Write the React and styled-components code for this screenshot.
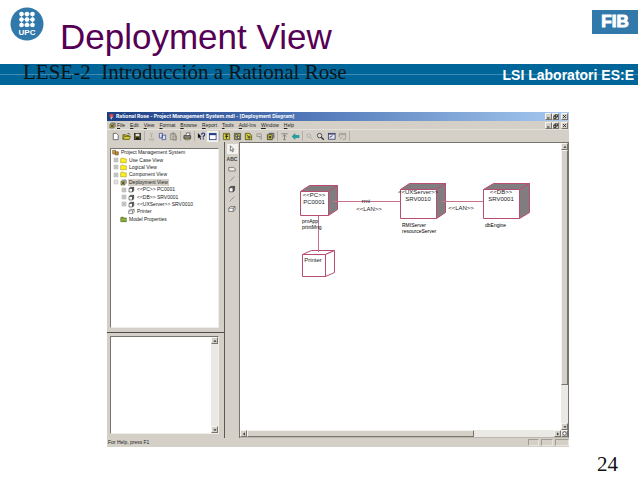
import React from "react";
import styled, { createGlobalStyle, css } from "styled-components";

const face = "#d4d0c8";

const GlobalStyle = createGlobalStyle`
  body {
    margin: 0;
    background: #fff;
    font-family: "Liberation Sans", Arial, sans-serif;
  }
  *, *::before, *::after { box-sizing: border-box; }
  button {
    margin: 0;
    padding: 0;
    border: 0;
    background: none;
    font: inherit;
    color: inherit;
  }
  svg { display: block; flex: none; }
`;

const Slide = styled.main`
  display: flex;
  flex-direction: column;
`;

const Header = styled.header`
  display: flex;
  align-items: flex-start;
  height: 64px;
  padding: 7px 0 0 10px;
`;

const SlideTitle = styled.h1`
  flex: 1;
  margin: 10px 0 0 16px;
  font-size: 35px;
  line-height: 40px;
  font-weight: 400;
  color: #550055;
  white-space: nowrap;
`;

const FibBadge = styled.div`
  display: flex;
  align-items: center;
  justify-content: center;
  width: 46px;
  height: 24px;
  margin-top: 3px;
  background: #3079aa;
`;

const Band = styled.div`
  display: flex;
  justify-content: space-between;
  height: 21px;
  padding: 0 4px 0 23px;
  background: linear-gradient(#3d8ab2, #3d8ab2) 0 10px / 100% 1px no-repeat #006699;
`;

const Course = styled.div`
  font-family: "Liberation Serif", "Times New Roman", serif;
  font-size: 21px;
  line-height: 16px;
  color: #0c1418;
  white-space: pre;
`;

const Department = styled.div`
  font-size: 14px;
  line-height: 22px;
  font-weight: 700;
  color: #fff;
  white-space: nowrap;
`;

const AppWindow = styled.section`
  display: flex;
  flex-direction: column;
  margin: 27px 69px 0 107px;
  background: ${face};
  font-size: 5px;
  line-height: 7px;
  color: #222;
`;

const TitleBar = styled.div`
  display: flex;
  align-items: center;
  height: 9px;
  padding: 0 1px 0 1px;
  gap: 1px;
  background: linear-gradient(90deg, #1d3f85, #4c73b4 40%, #a6caf0);
  color: #fff;
  font-family: Inter, "Liberation Sans", sans-serif;
  font-weight: 700;
  white-space: nowrap;
`;

const MenuBar = styled.nav`
  display: flex;
  align-items: center;
  height: 8px;
  padding: 0 1px 0 2px;
  white-space: nowrap;
`;

const Menus = styled.div`
  display: flex;
  flex: 1;
  gap: 5px;
  margin-left: 1px;
`;

const MenuButton = styled.button`
  &::first-letter { text-decoration: underline; }
`;

const WindowButtons = styled.div`
  display: flex;
  margin-left: auto;
`;

const raised = css`
  background: ${face};
  border: 1px solid;
  border-color: #f4f2ee #77746e #77746e #f4f2ee;
`;

const WindowButton = styled.button`
  ${raised}
  display: grid;
  place-items: center;
  width: 7px;
  height: 7px;
  margin-left: ${(p) => (p.$apart ? "2px" : "0")};
`;

const Toolbar = styled.div`
  display: flex;
  align-items: center;
  height: 13px;
  padding-left: 3px;
  border-top: 1px solid #e6e3dd;
`;

const ToolButton = styled.button`
  display: grid;
  place-items: center;
  width: 11px;
  height: 11px;
  background: ${(p) => (p.$on ? "#f3f2ee" : "transparent")};
`;

const Divider = styled.span`
  width: 1px;
  height: 10px;
  margin: 0 1px;
  background: #b4b0a8;
`;

const Body = styled.div`
  display: flex;
  height: 296px;
`;

const Side = styled.aside`
  display: flex;
  flex-direction: column;
  width: 117px;
  padding: 6px 5px 4px 3px;
`;

const sunken = css`
  background: #fff;
  border: 1px solid;
  border-color: #77746e #efede8 #efede8 #77746e;
`;

const Tree = styled.ul`
  ${sunken}
  flex: 181;
  margin: 0;
  padding: 0;
  list-style: none;
  display: grid;
  grid-template-rows: repeat(2, 37px);
  align-content: start;
`;

const TreeGroup = styled.li`
  display: grid;
  grid-template-rows: repeat(5, 1fr);
`;

const TreeRow = styled.div`
  display: flex;
  align-items: center;
  gap: 1px;
  padding-left: ${(p) => p.$indent}px;
  white-space: nowrap;
`;

const TreeLabel = styled.span`
  padding: 0 1px;
  background: ${(p) => (p.$selected ? face : "transparent")};
`;

const Splitter = styled.div`
  height: 1px;
  margin: 4px -5px 3px -3px;
  background: #4e4c48;
`;

const Documentation = styled.div`
  ${sunken}
  display: flex;
  justify-content: flex-end;
  flex: 97;
`;

const VScroll = styled.div`
  display: flex;
  flex-direction: column;
  width: 7px;
  background: #ebe9e6;
`;

const HScroll = styled.div`
  display: flex;
  height: 7px;
  background: #ebe9e6;
`;

const ScrollButton = styled.button`
  ${raised}
  display: grid;
  place-items: center;
  width: 7px;
  height: 7px;
  flex: none;
`;

const Thumb = styled.div`
  ${raised}
  flex: ${(p) => p.$share};
`;

const Track = styled.div`
  flex: ${(p) => p.$share};
`;

const Palette = styled.div`
  display: flex;
  flex-direction: column;
  align-items: center;
  width: 16px;
  padding-top: 2px;
  border-left: 1px solid #5a5854;
  border-right: 1px solid #77746e;
`;

const PaletteButton = styled.button`
  display: grid;
  place-items: center;
  width: 11px;
  height: 10px;
  background: ${(p) => (p.$on ? "#f3f2ee" : "transparent")};
`;

const Diagram = styled.div`
  display: flex;
  flex-direction: column;
  flex: 1;
  min-width: 0;
  border-top: 1px solid #77746e;
  border-bottom: 1px solid #bab6ae;
  border-right: 1px solid #77746e;
`;

const DiagramRow = styled.div`
  display: flex;
  flex: 1;
`;

const Canvas = styled.div`
  flex: 1;
  min-width: 0;
  overflow: hidden;
  background: #fff;
`;

const NodeLabel = styled.text`
  font-size: 6px;
  fill: #222;
  text-anchor: middle;
`;

const ProcessLabel = styled.text`
  font-size: 5px;
  fill: #000;
`;

const StatusBar = styled.div`
  display: flex;
  align-items: center;
  justify-content: space-between;
  height: 9px;
  padding: 0 0 0 1px;
`;

const StatusCells = styled.div`
  display: flex;
  gap: 2px;
`;

const StatusCell = styled.span`
  width: ${(p) => p.$w}px;
  height: 7px;
  border: 1px solid;
  border-color: #a19d95 #e8e5df #e8e5df #a19d95;
`;

const PageNumber = styled.footer`
  margin: 5px 20px 0 auto;
  font-family: "Liberation Serif", "Times New Roman", serif;
  font-size: 21px;
  line-height: 24px;
  color: #111;
`;

const UpcText = styled.text`
  font-size: 8px;
  font-weight: 700;
  fill: #fff;
  text-anchor: middle;
`;

const FibText = styled.span`
  font-size: 17px;
  line-height: 24px;
  font-weight: 700;
  color: #fff;
  -webkit-text-stroke: 1px #fff;
`;

function UpcLogo() {
  return (
    <svg width="34" height="34" viewBox="0 0 34 34" role="img" aria-label="UPC">
      <circle cx="17" cy="17" r="16.5" fill="#3079aa" />
      {[7, 12.5, 18].map((y) =>
        [11.5, 17, 22.5].map((x) => <circle key={`${x}-${y}`} cx={x} cy={y} r="2.3" fill="#fff" />)
      )}
      <path d="M11.5 7H22.5M11.5 12.5H22.5M11.5 18H22.5M11.5 7V18M17 7V18M22.5 7V18" stroke="#fff" strokeWidth="0.6" />
      <UpcText x="17" y="28">UPC</UpcText>
    </svg>
  );
}

const drawings = {
  page: <path d="M2.5 1.5H6L8 3.5V8.5H2.5Z" fill="#fff" stroke="#444" strokeWidth="0.8" />,
  open: (
    <>
      <path d="M1 8V3H4L5 4H8V8Z" fill="#b8a828" stroke="#444400" strokeWidth="0.7" />
      <path d="M1 8L3 5H9.5L8 8Z" fill="#dcd43c" stroke="#444400" strokeWidth="0.6" />
      <path d="M6 2Q8 0.5 9 3" fill="none" stroke="#222" strokeWidth="0.7" />
    </>
  ),
  save: (
    <>
      <rect x="1.5" y="1.5" width="7" height="7" fill="#5c5c20" stroke="#222" strokeWidth="0.8" />
      <rect x="3" y="2" width="4" height="2.6" fill="#ddd" />
      <rect x="3.4" y="6.2" width="3.4" height="2" fill="#111" />
    </>
  ),
  cut: <path d="M4 1L5.5 6M6 1L4.5 6M3.7 7.5a1 1 0 1 0 .1 0M6.3 7.5a1 1 0 1 0 .1 0" fill="none" stroke="#aaa7a0" strokeWidth="0.8" />,
  copy: <path d="M1.5 1.5H5V6.5H1.5ZM4.5 3.5H8.5V8.5H4.5Z" fill="#dfe4f4" stroke="#334488" strokeWidth="0.8" />,
  paste: <path d="M1.5 2H7.5V8.5H1.5ZM3.5 1H5.8V2.5H3.5ZM4.5 4.5H8.5V9H4.5Z" fill="#c2beb6" stroke="#8c8880" strokeWidth="0.8" />,
  print: (
    <>
      <path d="M3 4L4 1H8L7 4" fill="#fff" stroke="#333" strokeWidth="0.7" />
      <path d="M1 4H8.5V7.5H1Z" fill="#85857d" stroke="#333" strokeWidth="0.8" />
      <path d="M2.5 7H7V8.7H2.5Z" fill="#ccc84a" stroke="#333" strokeWidth="0.5" />
    </>
  ),
  help: (
    <>
      <path d="M1 1V7L2.5 5.7L3.6 8.4L4.6 8L3.5 5.3H5Z" fill="#111" />
      <path d="M5.2 3Q5.2 1.2 7 1.2T8.5 3Q8.5 4 7 4.8V6M7 7V8.2" fill="none" stroke="#1b2a80" strokeWidth="1.2" />
    </>
  ),
  window: (
    <>
      <rect x="1.5" y="1.5" width="7.5" height="7" fill="#fff" stroke="#223a88" strokeWidth="0.9" />
      <rect x="1.5" y="1.5" width="7.5" height="2" fill="#223a88" />
    </>
  ),
  doc: (
    <>
      <path d="M1.5 1.5H8.5V8.5H1.5Z" fill="#d0cb3e" stroke="#55531c" strokeWidth="0.8" />
      <path d="M3.5 3H7M3.5 5H7M5 3V7.5" stroke="#222" strokeWidth="0.9" />
    </>
  ),
  find: (
    <>
      <path d="M1.5 1.5H8.5V8.5H1.5Z" fill="#9d9a48" stroke="#444" strokeWidth="0.8" />
      <path d="M3 3H5V5H3ZM5 5H7.3V7.3H5Z" fill="#eee" stroke="#222" strokeWidth="0.6" />
    </>
  ),
  link: (
    <>
      <path d="M1.5 1.5H6.5L8.5 4V8.5H1.5Z" fill="#d4cf3c" stroke="#3d3d18" strokeWidth="0.8" />
      <path d="M3 3.5L6.5 6.5M6.5 4V6.5H4" fill="none" stroke="#222" strokeWidth="0.9" />
    </>
  ),
  gray: <path d="M2 2H7V5H2ZM4 5L7 8M7 5V8.5" fill="none" stroke="#96928a" strokeWidth="0.9" />,
  parent: <path d="M1.5 2H8.5M5 8.5V3.5M3 5L5 3.3L7 5M3.5 8.5H6.5" fill="none" stroke="#77746e" strokeWidth="0.9" />,
  back: <path d="M1 5L4.5 1.7V3.7H9V6.3H4.5V8.3Z" fill="#20a3a0" stroke="#167777" strokeWidth="0.4" />,
  zoomOff: <path d="M4 2a2 2 0 1 0 .1 0M5.6 5.6L8.5 8.5" fill="none" stroke="#aaa79f" strokeWidth="1" />,
  zoom: (
    <>
      <circle cx="4" cy="4" r="2.5" fill="#ddd" stroke="#333" strokeWidth="0.9" />
      <path d="M5.8 5.8L8.7 8.7" stroke="#333" strokeWidth="1.5" />
    </>
  ),
  fit: (
    <>
      <rect x="1.5" y="1.5" width="7.5" height="6.5" fill="#e8e8ee" stroke="#333a66" strokeWidth="0.9" />
      <path d="M1.5 2.3H9M3 6L6 4" stroke="#333a66" strokeWidth="1.1" />
    </>
  ),
  fitOff: <path d="M1.5 1.5H8.5V8H5M1.5 1.5V6M1.5 3H8.5M2 8L5 5" fill="none" stroke="#99958d" strokeWidth="0.9" />,
  arrow: <path d="M3 1V7.5L4.5 6.2L5.6 8.7L6.6 8.2L5.5 5.8H7.5Z" fill="#fff" stroke="#333" strokeWidth="0.7" />,
  note: <path d="M1 3H7L9 4.5V7.5H1Z" fill="#eceae4" stroke="#55524e" strokeWidth="0.8" />,
  line: <path d="M2 8L8 2" stroke="#77746e" strokeWidth="0.8" />,
  cubeDark: (
    <>
      <path d="M1.5 3.5H6.5V8.5H1.5Z" fill="#fff" stroke="#333" strokeWidth="0.9" />
      <path d="M1.5 3.5L3.5 1.7H8.3L6.5 3.5M8.3 1.7V6.7L6.5 8.5V3.5Z" fill="#555" stroke="#333" strokeWidth="0.6" />
    </>
  ),
  cube: <path d="M1 4H6.5V8H1ZM1 4L3.2 2H8.8L6.5 4M8.8 2V6L6.5 8" fill="#fff" stroke="#444" strokeWidth="0.8" />,
  plus: <path d="M2 2H8V8H2ZM3.2 5H6.8M5 3.2V6.8" fill="#fff" stroke="#77746e" strokeWidth="0.9" />,
  minus: <path d="M2 2H8V8H2ZM3.2 5H6.8" fill="#fff" stroke="#9a978f" strokeWidth="0.9" />,
  folder: <path d="M1 8.2V2.5L2 1.5H4.5L5.5 2.7H9V8.2Z" fill="#ffee22" stroke="#8f8500" strokeWidth="0.7" />,
  model: (
    <>
      <path d="M1 2H5V7H1Z" fill="#d8b33c" stroke="#5e3420" strokeWidth="0.8" />
      <path d="M4.5 4H9V8.5H4.5Z" fill="#c9903c" stroke="#5e3420" strokeWidth="0.8" />
    </>
  ),
  deploy: (
    <>
      <path d="M1.5 3H7V8.5H1.5Z" fill="#d6cc30" stroke="#333" strokeWidth="0.9" />
      <path d="M3 1.5H8.7V7" fill="none" stroke="#333" strokeWidth="0.9" />
      <path d="M3 4.5H5.8V7H3Z" fill="#444" />
    </>
  ),
  props: (
    <>
      <path d="M1 8.2V2.5L2 1.5H4.5L5.5 2.7H9V8.2Z" fill="#78a032" stroke="#3f5a14" strokeWidth="0.7" />
      <path d="M1 8L3 5H9" fill="none" stroke="#c0cc4a" strokeWidth="0.8" />
    </>
  ),
  rose: (
    <>
      <circle cx="5" cy="4" r="3" fill="#d64848" />
      <path d="M5 5V9M3 7L5 8L7 6" fill="none" stroke="#c9dfd0" strokeWidth="1" />
    </>
  ),
  min: <path d="M2 8H7" stroke="#222" strokeWidth="2" />,
  restore: <path d="M4 1.5H9V6H4ZM1.5 4H6V9H1.5Z" fill={face} stroke="#222" strokeWidth="1.6" />,
  close: <path d="M2 2L8 8M8 2L2 8" stroke="#222" strokeWidth="1.7" />,
  up: <path d="M1 7L5 2.5L9 7Z" fill="#333" />,
  down: <path d="M1 3L5 7.5L9 3Z" fill="#333" />,
  left: <path d="M7 1L2.5 5L7 9Z" fill="#222" />,
  right: <path d="M3 1L7.5 5L3 9Z" fill="#222" />,
  hand: <circle cx="5" cy="5" r="3.5" fill="#fff" stroke="#333" strokeWidth="1.5" />,
};

const Icon = ({ name, size = 9 }) => (
  <svg width={size} height={size} viewBox="0 0 10 10" aria-hidden="true">
    {drawings[name]}
  </svg>
);

const menus = ["File", "Edit", "View", "Format", "Browse", "Report", "Tools", "Add-Ins", "Window", "Help"];

const tools = [
  [["page", "New"], ["open", "Open"], ["save", "Save"]],
  [["cut", "Cut"], ["copy", "Copy"], ["paste", "Paste"]],
  [["print", "Print"]],
  [["help", "Context help"], ["window", "View documentation"]],
  [["doc", "Browse class diagram"], ["find", "Browse interaction diagram"], ["link", "Browse component diagram"], ["gray", "Browse state diagram"], ["deploy", "Browse deployment diagram"]],
  [["parent", "Browse parent"], ["back", "Browse previous"]],
  [["zoomOff", "Zoom in"], ["zoom", "Zoom out"], ["fit", "Fit in window"], ["fitOff", "Undo fit"]],
];

const treeGroups = [
  [
    { indent: 1, icon: "model", label: "Project Management System" },
    { indent: 2, toggle: "plus", icon: "folder", label: "Use Case View" },
    { indent: 2, toggle: "plus", icon: "folder", label: "Logical View" },
    { indent: 2, toggle: "plus", icon: "folder", label: "Component View" },
    { indent: 2, toggle: "minus", icon: "deploy", label: "Deployment View", selected: true },
  ],
  [
    { indent: 10, toggle: "plus", icon: "cubeDark", label: "<<PC>> PC0001" },
    { indent: 10, toggle: "plus", icon: "cubeDark", label: "<<DB>> SRV0001" },
    { indent: 10, toggle: "plus", icon: "cubeDark", label: "<<UXServer>> SRV0010" },
    { indent: 17, icon: "cube", label: "Printer" },
    { indent: 9, icon: "props", label: "Model Properties" },
  ],
];

const paletteTools = [
  ["arrow", "Selection tool"],
  ["abc", "Text box"],
  ["note", "Note"],
  ["line", "Anchor note to item"],
  ["cubeDark", "Processor"],
  ["line", "Connection"],
  ["cube", "Device"],
];

const AbcText = styled.span`
  font-weight: 700;
  color: #444;
`;

function Controls({ scope }) {
  return (
    <WindowButtons>
      <WindowButton aria-label={`Minimize ${scope}`}><Icon name="min" size={5} /></WindowButton>
      <WindowButton aria-label={`Restore ${scope}`}><Icon name="restore" size={5} /></WindowButton>
      <WindowButton $apart aria-label={`Close ${scope}`}><Icon name="close" size={5} /></WindowButton>
    </WindowButtons>
  );
}

function Cube({ x, y, w, h, dx, dy, shaded }) {
  return (
    <g stroke="#b94d70" strokeWidth="1" strokeLinejoin="round">
      <path d={`M${x} ${y}l${dx} ${-dy}h${w}l${-dx} ${dy}z`} fill={shaded ? "#807c80" : "#fff"} />
      <path d={`M${x + w} ${y}l${dx} ${-dy}v${h}l${-dx} ${dy}z`} fill={shaded ? "#807c80" : "#fff"} />
      <rect x={x} y={y} width={w} height={h} fill="#fff" />
    </g>
  );
}

function DeploymentDiagram() {
  return (
    <svg width="321" height="287" viewBox="0 0 321 287" role="img" aria-label="Deployment diagram">
      <Cube x={60.5} y={48.5} w={28} h={24} dx={9} dy={6} shaded />
      <Cube x={160.5} y={46.5} w={36} h={29} dx={9} dy={6} shaded />
      <Cube x={243.5} y={46.5} w={36} h={29} dx={10} dy={6} shaded />
      <Cube x={62.5} y={111.5} w={23} h={22} dx={9} dy={4} />
      <path d="M93 58.5H160M201 58.5H243M78.5 73V109" stroke="#c9708c" fill="none" />
      <NodeLabel x="74" y="54">&lt;&lt;PC&gt;&gt;</NodeLabel>
      <NodeLabel x="74" y="61">PC0001</NodeLabel>
      <NodeLabel x="126" y="60">rmi</NodeLabel>
      <NodeLabel x="129" y="68">&lt;&lt;LAN&gt;&gt;</NodeLabel>
      <NodeLabel x="178" y="51">&lt;&lt;UXServer&gt;&gt;</NodeLabel>
      <NodeLabel x="178" y="58">SRV0010</NodeLabel>
      <NodeLabel x="221" y="67">&lt;&lt;LAN&gt;&gt;</NodeLabel>
      <NodeLabel x="261" y="51">&lt;&lt;DB&gt;&gt;</NodeLabel>
      <NodeLabel x="261" y="58">SRV0001</NodeLabel>
      <NodeLabel x="73" y="119">Printer</NodeLabel>
      <ProcessLabel x="62" y="80">prnApp</ProcessLabel>
      <ProcessLabel x="62" y="86">printMng</ProcessLabel>
      <ProcessLabel x="162" y="84">RMIServer</ProcessLabel>
      <ProcessLabel x="162" y="90">resourceServer</ProcessLabel>
      <ProcessLabel x="245" y="84">dbEngine</ProcessLabel>
    </svg>
  );
}

export default function App() {
  return (
    <Slide>
      <GlobalStyle />
      <Header>
        <UpcLogo />
        <SlideTitle>Deployment View</SlideTitle>
        <FibBadge><FibText>FIB</FibText></FibBadge>
      </Header>
      <Band>
        <Course>{"LESE-2  Introducción a Rational Rose"}</Course>
        <Department>LSI Laboratori ES:E</Department>
      </Band>
      <AppWindow>
        <TitleBar>
          <Icon name="rose" size={7} />
          Rational Rose - Project Management System.mdl - [Deployment Diagram]
          <Controls scope="application" />
        </TitleBar>
        <MenuBar>
          <Icon name="deploy" size={7} />
          <Menus>
            {menus.map((m) => <MenuButton key={m}>{m}</MenuButton>)}
          </Menus>
          <Controls scope="diagram" />
        </MenuBar>
        <Toolbar>
          {tools.map((group, i) => (
            <React.Fragment key={i}>
              {group.map(([icon, label]) => (
                <ToolButton key={label} aria-label={label} $on={icon === "window"}>
                  <Icon name={icon} />
                </ToolButton>
              ))}
              <Divider />
            </React.Fragment>
          ))}
        </Toolbar>
        <Body>
          <Side>
            <Tree>
              {treeGroups.map((group, i) => (
                <TreeGroup key={i}>
                  {group.map((row) => (
                    <TreeRow key={row.label} $indent={row.indent}>
                      {row.toggle && <Icon name={row.toggle} size={6} />}
                      <Icon name={row.icon} size={7} />
                      <TreeLabel $selected={row.selected}>{row.label}</TreeLabel>
                    </TreeRow>
                  ))}
                </TreeGroup>
              ))}
            </Tree>
            <Splitter />
            <Documentation>
              <VScroll>
                <ScrollButton aria-label="Scroll documentation up"><Icon name="up" size={4} /></ScrollButton>
                <Track $share={1} />
                <ScrollButton aria-label="Scroll documentation down"><Icon name="down" size={4} /></ScrollButton>
              </VScroll>
            </Documentation>
          </Side>
          <Palette>
            {paletteTools.map(([icon, label]) => (
              <PaletteButton key={label} aria-label={label} $on={icon === "arrow"}>
                {icon === "abc" ? <AbcText>ABC</AbcText> : <Icon name={icon} size={8} />}
              </PaletteButton>
            ))}
          </Palette>
          <Diagram>
            <DiagramRow>
              <Canvas><DeploymentDiagram /></Canvas>
              <VScroll>
                <ScrollButton aria-label="Scroll up"><Icon name="up" size={4} /></ScrollButton>
                <Thumb $share={235} />
                <Track $share={38} />
                <ScrollButton aria-label="Scroll down"><Icon name="down" size={4} /></ScrollButton>
              </VScroll>
            </DiagramRow>
            <HScroll>
              <ScrollButton aria-label="Scroll left"><Icon name="left" size={4} /></ScrollButton>
              <Thumb $share={226} />
              <Track $share={81} />
              <ScrollButton aria-label="Scroll right"><Icon name="right" size={4} /></ScrollButton>
              <ScrollButton aria-label="Overview"><Icon name="hand" size={5} /></ScrollButton>
            </HScroll>
          </Diagram>
        </Body>
        <StatusBar>
          For Help, press F1
          <StatusCells>
            <StatusCell $w={11} />
            <StatusCell $w={12} />
            <StatusCell $w={14} />
          </StatusCells>
        </StatusBar>
      </AppWindow>
      <PageNumber>24</PageNumber>
    </Slide>
  );
}
